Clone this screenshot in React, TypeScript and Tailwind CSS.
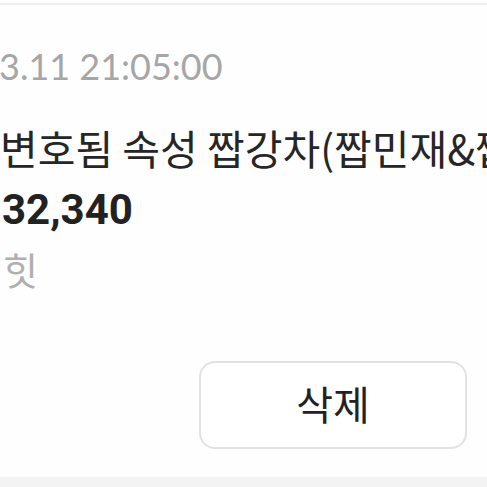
export default function App() {
  return (
    <div className="flex h-[487px] w-full flex-col overflow-hidden bg-[#fefefe]">
      {/* 상단 구분선 */}
      <div className="mt-[3px] h-[2px] w-full bg-[#eeeeee]" />

      <div className="mt-[41px] flex flex-col whitespace-nowrap">
        <span className="-ml-[1px] font-['Lato',sans-serif] text-[36px] leading-[40px] text-[#a6a6a6]">
          3.11 21:05:00
        </span>
        <span className="mt-[35px] font-['Noto_Sans_CJK_KR',sans-serif] text-[41px] leading-[52px] text-[#262626]">
          변호됨 속성 짭강차(짭민재&amp;짭강차)
        </span>
        <span className="mt-[13px] pl-[2px] font-['Roboto',sans-serif] text-[42px] font-bold leading-[48px] text-[#222222]">
          32,340
        </span>
        <span className="mt-[12px] pl-[3px] font-['Noto_Sans_CJK_KR',sans-serif] text-[38px] leading-[46px] text-[#b0b0b0]">
          힛
        </span>
      </div>

      <div className="mt-[69px] flex justify-end pr-[20px]">
        <button className="flex h-[88px] w-[268px] items-center justify-center rounded-[16px] border-2 border-[#e2e2e2] bg-white pb-[4px] font-['Noto_Sans_CJK_KR',sans-serif] text-[40px] text-[#222222]">
          삭제
        </button>
      </div>

      <div className="mt-auto h-[10px] w-full bg-[#f3f3f3]" />
    </div>
  );
}
